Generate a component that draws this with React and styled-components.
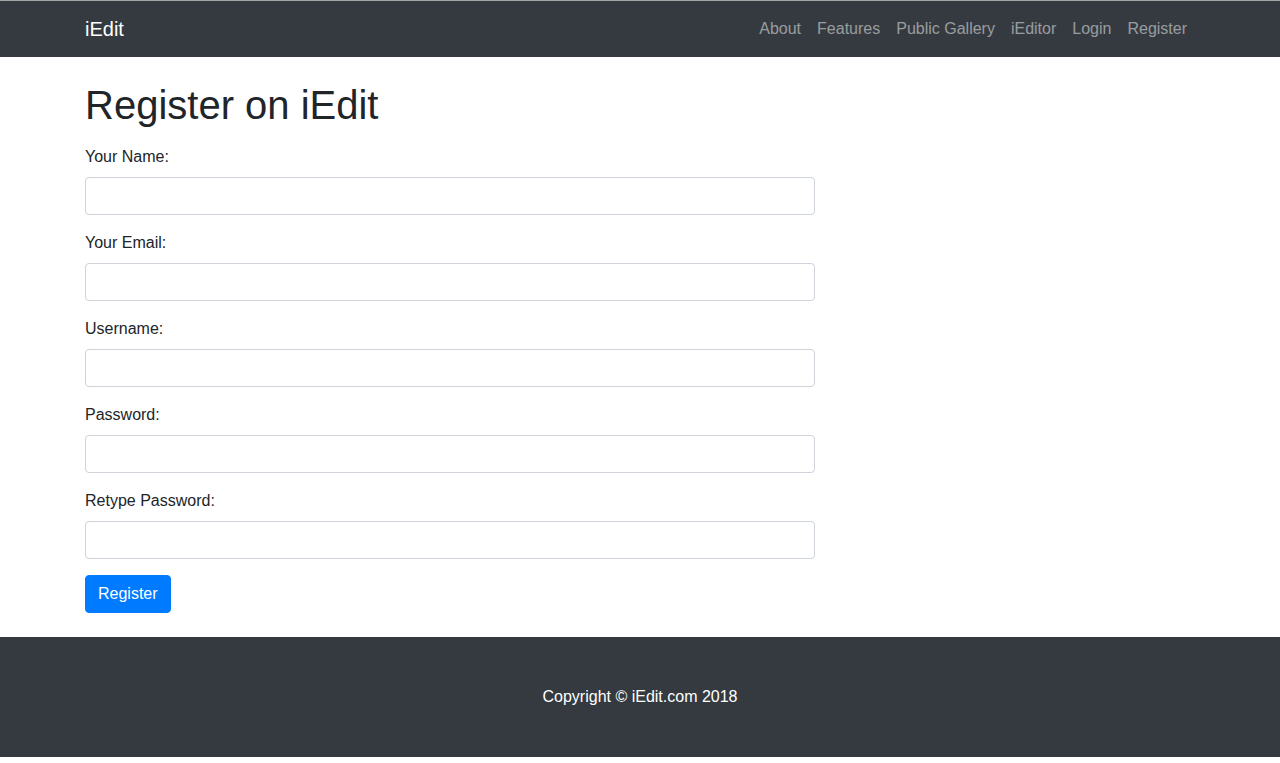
import React from "react";
import styled, { createGlobalStyle } from "styled-components";

const Global = createGlobalStyle`
  *, *::before, *::after { box-sizing: border-box; }
  html, body { margin: 0; padding: 0; background: #fff; }
  body {
    font-family: "Liberation Sans", Arial, sans-serif;
    font-size: 16px;
    line-height: 1.5;
    color: #212529;
  }
`;

const NavBar = styled.nav`
  background: #343a40;
  border-top: 1px solid #a3a3a3;
  padding: 8px 16px;
`;

const Container = styled.div`
  max-width: 1140px;
  margin: 0 auto;
  padding: 0 15px;
`;

const NavInner = styled(Container)`
  display: flex;
  align-items: center;
  justify-content: space-between;
`;

const Brand = styled.a`
  color: #fff;
  font-size: 20px;
  line-height: 30px;
  padding: 5px 0;
  text-decoration: none;
`;

const NavList = styled.div`
  display: flex;
`;

const NavLink = styled.a`
  color: rgba(255, 255, 255, 0.5);
  padding: 8px;
  line-height: 24px;
  text-decoration: none;
`;

const Main = styled(Container)`
  padding-bottom: 24px;
`;

const Title = styled.h1`
  font-size: 40px;
  font-weight: 500;
  line-height: 1.2;
  margin: 24px 0 16px;
`;

const Form = styled.form`
  width: 730px;
`;

const Group = styled.div`
  margin-bottom: 16px;
`;

const Label = styled.label`
  display: block;
  margin-bottom: 8px;
`;

const Input = styled.input`
  display: block;
  width: 100%;
  height: 38px;
  padding: 6px 12px;
  font: inherit;
  border: 1px solid #ced4da;
  border-radius: 4px;
  background: #fff;
  color: #495057;
`;

const Button = styled.button`
  font: inherit;
  line-height: 24px;
  color: #fff;
  background: #007bff;
  border: 1px solid #007bff;
  border-radius: 4px;
  padding: 6px 12px;
`;

const Footer = styled.footer`
  background: #343a40;
  color: #fff;
  text-align: center;
  padding: 48px 0;
  line-height: 24px;
`;

const fields = [
  ["Your Name:", "text"],
  ["Your Email:", "email"],
  ["Username:", "text"],
  ["Password:", "password"],
  ["Retype Password:", "password"],
];

export default function App() {
  return (
    <>
      <Global />
      <NavBar>
        <NavInner>
          <Brand href="#">iEdit</Brand>
          <NavList>
            {["About", "Features", "Public Gallery", "iEditor", "Login", "Register"].map((l) => (
              <NavLink key={l} href="#">{l}</NavLink>
            ))}
          </NavList>
        </NavInner>
      </NavBar>
      <Main>
        <Title>Register on iEdit</Title>
        <Form onSubmit={(e) => e.preventDefault()}>
          {fields.map(([label, type]) => (
            <Group key={label}>
              <Label>{label}</Label>
              <Input type={type} />
            </Group>
          ))}
          <Button type="submit">Register</Button>
        </Form>
      </Main>
      <Footer>Copyright © iEdit.com 2018</Footer>
    </>
  );
}
